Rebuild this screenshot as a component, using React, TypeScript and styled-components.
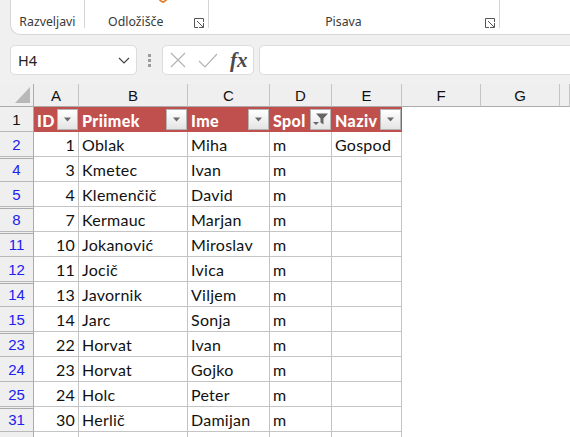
import React from 'react';
import styled, { createGlobalStyle } from 'styled-components';

const GlobalStyle = createGlobalStyle`
  html, body {
    margin: 0;
    padding: 0;
    background: #f0f0f0;
    overflow: hidden;
  }
`;

const Page = styled.div`
  width: 570px;
  height: 437px;
  overflow: hidden;
  display: flex;
  flex-direction: column;
  background: #f0f0f0;
  font-family: 'Noto Sans', sans-serif;
`;

const Ribbon = styled.div`
  height: 35px;
  margin-left: 10px;
  display: flex;
  flex-shrink: 0;
  background: #fff;
  border: 1px solid #d6d6d6;
  border-top: none;
  border-right: none;
  border-bottom-left-radius: 10px;
  box-sizing: border-box;
`;

const RibbonGroup = styled.div<{ $width: number; $last?: boolean }>`
  position: relative;
  width: ${(p) => p.$width}px;
  height: 28px;
  border-right: ${(p) => (p.$last ? 'none' : '1px solid #d4d4d4')};
  display: flex;
  align-items: flex-end;
  justify-content: center;
  box-sizing: border-box;
`;

const GroupLabel = styled.span<{ $launcher?: boolean }>`
  font-size: 12.3px;
  line-height: 16px;
  color: #3a3a3a;
  margin-right: ${(p) => (p.$launcher ? 21 : 0)}px;
  margin-bottom: -2px;
`;

const Launcher = styled.svg`
  position: absolute;
  right: 4px;
  bottom: 0;
  width: 10px;
  height: 10px;
`;

const ClipMark = styled.svg`
  position: absolute;
  left: 73px;
  top: 0;
  width: 10px;
  height: 3px;
`;

const FormulaBar = styled.div`
  height: 30px;
  margin-top: 10px;
  display: flex;
  align-items: stretch;
  flex-shrink: 0;
  padding-left: 10px;
`;

const BarBox = styled.div`
  background: #fff;
  border: 1px solid #dcdcdc;
  border-radius: 5px;
  box-sizing: border-box;
  display: flex;
  align-items: center;
`;

const NameBox = styled(BarBox)`
  width: 127px;
  padding: 0 6px 0 7px;
  justify-content: space-between;
  font-size: 14.5px;
  color: #222;
`;

const Grip = styled.div`
  width: 25px;
  display: flex;
  flex-direction: column;
  align-items: center;
  justify-content: center;
  gap: 2px;
`;

const GripDot = styled.i`
  width: 3px;
  height: 3px;
  background: #9c9c9c;
`;

const ActionsBox = styled(BarBox)`
  width: 92px;
  padding: 0 0 0 7px;
  gap: 12px;
`;

const FxLabel = styled.span`
  font-family: 'Liberation Serif', serif;
  font-style: italic;
  font-size: 21px;
  font-weight: 700;
  color: #4a4a4a;
  line-height: 20px;
`;

const FormulaInput = styled(BarBox)`
  flex: 1;
  margin-left: 5px;
  border-right: none;
  border-radius: 5px 0 0 5px;
`;

const Sheet = styled.div`
  margin-top: 9px;
  display: grid;
  grid-template-columns: 34px 45px 109px 82px 62px 70px 79px 79px 10px;
  grid-template-rows: 23px 25px;
  grid-auto-rows: 25px;
  font-family: 'Lato', sans-serif;
  font-size: 16px;
  letter-spacing: 0.25px;
  color: #111;
  background: #fff;
`;

const Corner = styled.div`
  position: relative;
  background: #efefef;
  border-right: 1px solid #ababab;
  border-bottom: 1px solid #ababab;
  box-sizing: border-box;
`;

const CornerMark = styled.div`
  position: absolute;
  right: 3px;
  bottom: 3px;
  width: 0;
  height: 0;
  border-left: 15px solid transparent;
  border-bottom: 16px solid #b8b8b8;
`;

const ColHead = styled.div`
  background: #efefef;
  border-right: 1px solid #c4c4c4;
  border-bottom: 1px solid #ababab;
  box-sizing: border-box;
  display: flex;
  align-items: center;
  justify-content: center;
  font-family: 'Liberation Sans', sans-serif;
  font-size: 15px;
  letter-spacing: 0;
  color: #111;
`;

const RowHead = styled.div<{ $gap?: boolean; $plain?: boolean }>`
  position: relative;
  background: #efefef;
  border-right: 1px solid #ababab;
  border-bottom: 1px solid #b8b8b8;
  box-sizing: border-box;
  display: flex;
  align-items: center;
  justify-content: center;
  padding-top: 1px;
  font-family: 'Liberation Sans', sans-serif;
  font-size: 15px;
  letter-spacing: 0;
  color: ${(p) => (p.$plain ? '#111' : '#2020f0')};

  &::before {
    content: '';
    display: ${(p) => (p.$gap ? 'block' : 'none')};
    position: absolute;
    left: 0;
    right: 0;
    top: 1px;
    height: 1px;
    background: #ababab;
  }
`;

const TitleCell = styled.div`
  background: #c0504d;
  box-sizing: border-box;
  display: flex;
  align-items: center;
  justify-content: space-between;
  padding: 0 1px 0 3px;
  color: #fff;
  font-weight: 900;
  font-size: 16px;
  letter-spacing: 0.4px;
`;

const TitleText = styled.span`
  padding-top: 2px;
`;

const FilterButton = styled.div`
  width: 21px;
  height: 21px;
  box-sizing: border-box;
  flex-shrink: 0;
  background: linear-gradient(#ffffff, #e4e4e4);
  border: 1px solid #b4b4b4;
  display: flex;
  align-items: center;
  justify-content: center;
`;

const Cell = styled.div<{ $right?: boolean }>`
  border-right: 1px solid #c4c4c4;
  border-bottom: 1px solid #c4c4c4;
  box-sizing: border-box;
  display: flex;
  align-items: center;
  justify-content: ${(p) => (p.$right ? 'flex-end' : 'flex-start')};
  padding: 1px 3px 0;
`;

const PlainCell = styled.div`
  background: #fff;
`;

const columns = ['A', 'B', 'C', 'D', 'E', 'F', 'G', ''];

const titles = [
  { text: 'ID', filtered: false },
  { text: 'Priimek', filtered: false },
  { text: 'Ime', filtered: false },
  { text: 'Spol', filtered: true },
  { text: 'Naziv', filtered: false },
];

const rows = [
  { n: 2, id: 1, last: 'Oblak', first: 'Miha', title: 'Gospod' },
  { n: 4, id: 3, last: 'Kmetec', first: 'Ivan', gap: true },
  { n: 5, id: 4, last: 'Klemenčič', first: 'David' },
  { n: 8, id: 7, last: 'Kermauc', first: 'Marjan', gap: true },
  { n: 11, id: 10, last: 'Jokanović', first: 'Miroslav', gap: true },
  { n: 12, id: 11, last: 'Jocič', first: 'Ivica' },
  { n: 14, id: 13, last: 'Javornik', first: 'Viljem', gap: true },
  { n: 15, id: 14, last: 'Jarc', first: 'Sonja' },
  { n: 23, id: 22, last: 'Horvat', first: 'Ivan', gap: true },
  { n: 24, id: 23, last: 'Horvat', first: 'Gojko' },
  { n: 25, id: 24, last: 'Holc', first: 'Peter' },
  { n: 31, id: 30, last: 'Herlič', first: 'Damijan', gap: true },
];

const LauncherIcon = () => (
  <Launcher viewBox="0 0 10 10" fill="none" stroke="#555" strokeWidth="1">
    <path d="M9.5 4V.5H.5V9.5H4" />
    <path d="M3 3l6 6M9.5 5v4.5H5" />
  </Launcher>
);

const ArrowIcon = () => (
  <svg width="9" height="5" viewBox="0 0 9 5">
    <path d="M1 0.5h7L4.5 4.5z" fill="#6a6a6a" />
  </svg>
);

const FilterIcon = () => (
  <svg width="19" height="19" viewBox="0 0 19 19">
    <path d="M5 3.5h12l-4.5 5v6l-3-2v-4z" fill="#666" />
    <path d="M2 12h6l-3 3z" fill="#666" />
  </svg>
);

export default function App() {
  return (
    <Page>
      <GlobalStyle />
      <Ribbon>
        <RibbonGroup $width={74}>
          <GroupLabel>Razveljavi</GroupLabel>
        </RibbonGroup>
        <RibbonGroup $width={124}>
          <ClipMark viewBox="0 0 10 3">
            <path d="M1.5 0L5 2.2 8.5 0" fill="none" stroke="#e07b26" strokeWidth="1.6" />
          </ClipMark>
          <GroupLabel $launcher>Odložišče</GroupLabel>
          <LauncherIcon />
        </RibbonGroup>
        <RibbonGroup $width={292}>
          <GroupLabel $launcher>Pisava</GroupLabel>
          <LauncherIcon />
        </RibbonGroup>
        <RibbonGroup $width={70} $last />
      </Ribbon>

      <FormulaBar>
        <NameBox>
          H4
          <svg width="12" height="7" viewBox="0 0 12 7" fill="none" stroke="#444" strokeWidth="1.2">
            <path d="M1 1l5 5 5-5" />
          </svg>
        </NameBox>
        <Grip>
          <GripDot />
          <GripDot />
          <GripDot />
        </Grip>
        <ActionsBox>
          <svg width="16" height="16" viewBox="0 0 16 16" fill="none" stroke="#b4b4b4" strokeWidth="1.2">
            <path d="M1 1l14 14M15 1L1 15" />
          </svg>
          <svg width="20" height="15" viewBox="0 0 20 15" fill="none" stroke="#b4b4b4" strokeWidth="1.2">
            <path d="M1 8l6 6L19 1" />
          </svg>
          <FxLabel>fx</FxLabel>
        </ActionsBox>
        <FormulaInput />
      </FormulaBar>

      <Sheet>
        <Corner>
          <CornerMark />
        </Corner>
        {columns.map((c, i) => (
          <ColHead key={i}>{c}</ColHead>
        ))}

        <RowHead $plain>1</RowHead>
        {titles.map((t) => (
          <TitleCell key={t.text}>
            <TitleText>{t.text}</TitleText>
            <FilterButton>{t.filtered ? <FilterIcon /> : <ArrowIcon />}</FilterButton>
          </TitleCell>
        ))}
        <PlainCell />
        <PlainCell />
        <PlainCell />

        {rows.map((r) => (
          <React.Fragment key={r.n}>
            <RowHead $gap={r.gap}>{r.n}</RowHead>
            <Cell $right>{r.id}</Cell>
            <Cell>{r.last}</Cell>
            <Cell>{r.first}</Cell>
            <Cell>m</Cell>
            <Cell>{r.title}</Cell>
            <PlainCell />
            <PlainCell />
            <PlainCell />
          </React.Fragment>
        ))}

        <RowHead />
        <Cell />
        <Cell />
        <Cell />
        <Cell />
        <Cell />
      </Sheet>
    </Page>
  );
}
